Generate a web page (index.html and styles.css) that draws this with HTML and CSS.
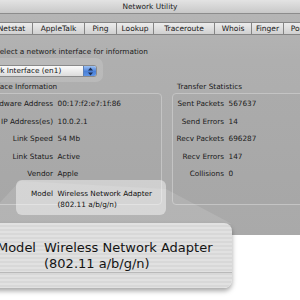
FILE: index.html
```html
<!DOCTYPE html>
<html>
<head>
<meta charset="utf-8">
<title>Network Utility</title>
<link rel="stylesheet" href="styles.css">
</head>
<body>
<div class="window">
  <div class="titlebar">Network Utility</div>
  <div class="toolbar">
    <div class="tabs">
      <div class="tab tab-netstat">Netstat</div>
      <div class="tab tab-appletalk">AppleTalk</div>
      <div class="tab tab-ping">Ping</div>
      <div class="tab tab-lookup">Lookup</div>
      <div class="tab tab-traceroute">Traceroute</div>
      <div class="tab tab-whois">Whois</div>
      <div class="tab tab-finger">Finger</div>
      <div class="tab tab-portscan">Port Scan</div>
    </div>
  </div>
  <div class="prompt">Select a network interface for information</div>
  <div class="selector">
    <div class="popup">
      <span class="popup-text">Network Interface (en1)</span>
      <span class="stepper">
        <svg width="7" height="9" viewBox="0 0 7 9"><path d="M3.5 0.5 L6 3.5 L1 3.5 Z M3.5 8.5 L6 5.5 L1 5.5 Z" fill="#1c2f55"/></svg>
      </span>
    </div>
  </div>
  <div class="groups">
    <section class="group group-left">
      <div class="group-title">Interface Information</div>
      <div class="box">
        <dl class="rows rows-left">
          <dt>Hardware Address</dt><dd>00:17:f2:e7:1f:86</dd>
          <dt>IP Address(es)</dt><dd>10.0.2.1</dd>
          <dt>Link Speed</dt><dd>54 Mb</dd>
          <dt>Link Status</dt><dd>Active</dd>
          <dt>Vendor</dt><dd>Apple</dd>
          <dt class="model">Model</dt><dd class="model">Wireless Network Adapter<br>(802.11 a/b/g/n)</dd>
        </dl>
      </div>
    </section>
    <section class="group group-right">
      <div class="group-title">Transfer Statistics</div>
      <div class="box">
        <dl class="rows rows-right">
          <dt>Sent Packets</dt><dd>567637</dd>
          <dt>Send Errors</dt><dd>14</dd>
          <dt>Recv Packets</dt><dd>696287</dd>
          <dt>Recv Errors</dt><dd>147</dd>
          <dt>Collisions</dt><dd>0</dd>
        </dl>
      </div>
    </section>
  </div>
</div>

<svg class="beams" width="300" height="300" viewBox="0 0 300 300">
  <polygon points="20,181 166,189 232,224 -20,224" fill="rgba(255,255,255,0.12)"/>
</svg>
<div class="highlight"></div>

<div class="callout">
  <div class="callout-row">
    <div class="callout-label">Model</div>
    <div class="callout-value">Wireless Network Adapter<br>(802.11 a/b/g/n)</div>
  </div>
  <div class="callout-foot"></div>
</div>
</body>
</html>
```
FILE: styles.css
```css
* { box-sizing: border-box; }
html, body { margin: 0; padding: 0; }
body {
  width: 300px;
  height: 300px;
  overflow: hidden;
  position: relative;
  background: #ffffff;
  font-family: "DejaVu Sans", "Liberation Sans", sans-serif;
  font-size: 7.3px;
  color: #1a1a1a;
}

.window {
  height: 235px;
  overflow: hidden;
  background: linear-gradient(#b7b7b7 0, #afafaf 60px, #a9a9a9 235px);
}

.titlebar {
  height: 14px;
  line-height: 13px;
  text-align: center;
  font-size: 7.4px;
  color: #222;
  background: linear-gradient(#e3e3e3, #c8c8c8);
  border-bottom: 1px solid #8c8c8c;
}

.toolbar { padding-top: 8px; }

.tabs {
  display: flex;
  margin-left: -9px;
  height: 13px;
  border-top: 1px solid #858585;
  border-bottom: 1px solid #858585;
  background: linear-gradient(#ececec, #d0d0d0);
  white-space: nowrap;
}
.tab {
  flex: none;
  text-align: center;
  line-height: 11px;
  font-size: 7.5px;
  color: #161616;
  border-right: 1px solid #858585;
}
.tab-netstat { width: 42px; }
.tab-appletalk { width: 52px; }
.tab-ping { width: 32px; }
.tab-lookup { width: 37px; }
.tab-traceroute { width: 61px; }
.tab-whois { width: 37px; }
.tab-finger { width: 32px; }
.tab-portscan { width: 50px; }

.prompt {
  margin: 12px 0 1px -5px;
  line-height: 10px;
  white-space: nowrap;
}

.selector {
  margin-left: -40px;
  width: 143px;
  height: 24px;
  padding: 7px 0 0 8px;
  background: rgba(255, 255, 255, 0.14);
  border-radius: 0 7px 7px 0;
}
.popup {
  display: flex;
  width: 129px;
  height: 12px;
  border: 1px solid #8a8a8a;
  border-radius: 3px;
  background: linear-gradient(#fbfbfb, #dcdcdc);
  overflow: hidden;
}
.popup-text {
  flex: 1;
  padding-left: 5px;
  line-height: 10px;
  white-space: nowrap;
  color: #151515;
}
.stepper {
  width: 13px;
  display: flex;
  align-items: center;
  justify-content: center;
  background: linear-gradient(#9cc0f2, #4a80d8 55%, #5d93e4);
  border-left: 1px solid #5a7fb8;
}

.groups {
  display: flex;
  gap: 10px;
  margin-left: -25px;
}
.group { flex: none; }
.group-left { width: 187px; }
.group-right { width: 150px; }
.group-title {
  line-height: 10px;
  padding-left: 5px;
  white-space: nowrap;
}
.box {
  margin-top: 1px;
  height: 112px;
  padding-top: 1px;
  border: 1px solid #c4c4c4;
  border-radius: 4px;
  background: rgba(0, 0, 0, 0.015);
}
.rows {
  display: grid;
  column-gap: 4.5px;
  margin: 0;
  line-height: 17.5px;
}
.rows-left { grid-template-columns: 77px 1fr; }
.rows-right { grid-template-columns: 51px 1fr; }
.rows dt { text-align: right; white-space: nowrap; }
.rows dd { margin: 0; white-space: nowrap; }
.rows .model {
  position: relative;
  z-index: 3;
  padding-top: 5px;
  line-height: 11px;
  color: #111;
}

.beams {
  position: absolute;
  left: 0;
  top: 0;
  z-index: 1;
}

.highlight {
  position: absolute;
  z-index: 2;
  left: 16px;
  top: 180px;
  width: 150px;
  height: 35px;
  border-radius: 6px;
  background: rgba(255, 255, 255, 0.45);
}

.callout {
  position: absolute;
  z-index: 4;
  left: -22px;
  top: 223px;
  width: 254px;
  height: 65px;
  border-radius: 8px;
  overflow: hidden;
  background: repeating-linear-gradient(#e1e1e1 0 2px, #d8d8d8 2px 4px);
  box-shadow: 0 3px 5px rgba(0, 0, 0, 0.35);
  font-size: 13px;
  color: #141414;
}
.callout-row {
  display: grid;
  grid-template-columns: 58px 1fr;
  column-gap: 8px;
  padding-top: 17px;
  line-height: 16px;
  white-space: nowrap;
}
.callout-label { text-align: right; }
.callout-foot {
  height: 16px;
  border-top: 1px solid #b9b9b9;
}
```
